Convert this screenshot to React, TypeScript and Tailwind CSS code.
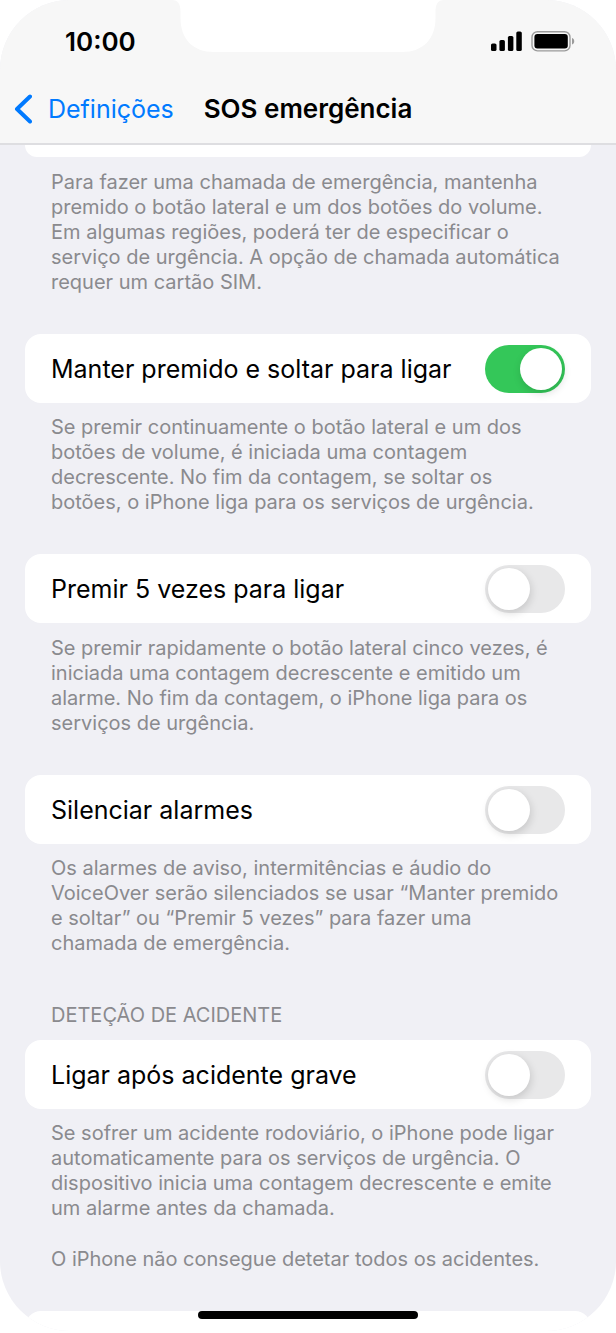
import React, { useId, useState } from 'react'

type SwitchRowProps = {
  label: string
  defaultOn?: boolean
}

function SwitchRow({ label, defaultOn = false }: SwitchRowProps) {
  const id = useId()
  const [on, setOn] = useState(defaultOn)

  return (
    <div className="flex h-[69px] items-center justify-between rounded-2xl bg-white px-[26px]">
      <label htmlFor={id} className="text-[25px] leading-8 whitespace-nowrap text-black">
        {label}
      </label>
      <input
        id={id}
        type="checkbox"
        role="switch"
        checked={on}
        onChange={(event) => setOn(event.target.checked)}
        className="h-12 w-20 shrink-0 appearance-none rounded-full bg-[#e8e8e9] p-[3px] before:block before:size-[42px] before:rounded-full before:bg-white before:shadow-[1px_3px_8px_rgba(0,0,0,0.15)] before:content-[''] checked:bg-[#34c759] checked:before:ml-8"
      />
    </div>
  )
}

function Note({ children }: React.PropsWithChildren) {
  return <p className="px-[26px] text-[20px] leading-[25px] whitespace-pre-line text-[#8a8a8e]">{children}</p>
}

function StatusBar() {
  return (
    <div className="relative flex h-[75px] items-center justify-between pt-2 pr-[41px] pl-[65px]">
      <time className="text-[26px] leading-8 font-semibold">10:00</time>
      <svg className="absolute top-0 left-1/2 -translate-x-1/2" width="272" height="52" viewBox="0 0 272 52" fill="#fff">
        <path d="M0 0C6 0 8.500 4 8.500 12V18C8.500 39 21 52 42 52H230C251 52 263.500 39 263.500 18V12C263.500 4 266 0 272 0Z" />
      </svg>
      <svg width="84" height="22" viewBox="0 0 84 22" role="img" aria-label="Rede e bateria">
        <rect x="0" y="12.500" width="5.500" height="7.500" rx="1.600" />
        <rect x="8.400" y="9" width="5.500" height="11" rx="1.600" />
        <rect x="16.900" y="5" width="5.500" height="15" rx="1.600" />
        <rect x="25.300" y="0.500" width="5.500" height="19.500" rx="1.600" />
        <rect x="41" y="0.700" width="38" height="19.200" rx="5.500" fill="none" stroke="#9b9b9b" strokeWidth="1.400" />
        <rect x="43.400" y="3" width="33.400" height="14.600" rx="3" />
        <path d="M81 7C84 8 84 12.500 81 13.500Z" fill="#9b9b9b" />
      </svg>
    </div>
  )
}

function NavBar() {
  return (
    <nav className="grid h-[68px] grid-cols-[1fr_auto_1fr] items-center">
      <a href="#definicoes" className="flex items-center gap-4 pl-[13px] text-[25px] leading-8 text-[#007aff]">
        <svg width="19" height="30" viewBox="0 0 19 30" fill="none" stroke="currentColor" strokeWidth="4" strokeLinecap="round" strokeLinejoin="round">
          <path d="M17 2.500L4 15L17 27.500" />
        </svg>
        Definições
      </a>
      <h1 className="text-[26px] leading-8 font-semibold whitespace-nowrap">SOS emergência</h1>
    </nav>
  )
}

export default function App() {
  return (
    <div className="bg-white font-['Inter','Liberation_Sans',sans-serif] text-black">
      <div className="relative overflow-hidden rounded-[70px] bg-[#f0f0f5]">
        <header className="border-b-2 border-[#dedee1] bg-[#f7f7f7]">
          <StatusBar />
          <NavBar />
        </header>

        <main className="flex flex-col gap-[39px] px-[25px]">
          <section className="flex flex-col gap-[13px]">
            <div className="h-3 rounded-b-2xl bg-white" />
            <Note>
              {`Para fazer uma chamada de emergência, mantenha
              premido o botão lateral e um dos botões do volume.
              Em algumas regiões, poderá ter de especificar o
              serviço de urgência. A opção de chamada automática
              requer um cartão SIM.`}
            </Note>
          </section>

          <section className="flex flex-col gap-3">
            <SwitchRow label="Manter premido e soltar para ligar" defaultOn />
            <Note>
              {`Se premir continuamente o botão lateral e um dos
              botões de volume, é iniciada uma contagem
              decrescente. No fim da contagem, se soltar os
              botões, o iPhone liga para os serviços de urgência.`}
            </Note>
          </section>

          <section className="flex flex-col gap-[13px]">
            <SwitchRow label="Premir 5 vezes para ligar" />
            <Note>
              {`Se premir rapidamente o botão lateral cinco vezes, é
              iniciada uma contagem decrescente e emitido um
              alarme. No fim da contagem, o iPhone liga para os
              serviços de urgência.`}
            </Note>
          </section>

          <section className="flex flex-col gap-3">
            <SwitchRow label="Silenciar alarmes" />
            <Note>
              {`Os alarmes de aviso, intermitências e áudio do
              VoiceOver serão silenciados se usar “Manter premido
              e soltar” ou “Premir 5 vezes” para fazer uma
              chamada de emergência.`}
            </Note>
          </section>

          <section className="flex flex-col gap-3 pt-2">
            <h2 className="px-[26px] text-[20px] leading-[25px] text-[#8a8a8e]">DETEÇÃO DE ACIDENTE</h2>
            <SwitchRow label="Ligar após acidente grave" />
            <Note>
              {`Se sofrer um acidente rodoviário, o iPhone pode ligar
              automaticamente para os serviços de urgência. O
              dispositivo inicia uma contagem decrescente e emite
              um alarme antes da chamada.`}
            </Note>
            <div className="pt-[14px]">
              <Note>O iPhone não consegue detetar todos os acidentes.</Note>
            </div>
          </section>

          <div className="h-5 rounded-t-2xl bg-white" />
        </main>

        <div className="absolute bottom-3 left-1/2 h-2 w-[220px] -translate-x-1/2 rounded-full bg-black" />
      </div>
    </div>
  )
}
